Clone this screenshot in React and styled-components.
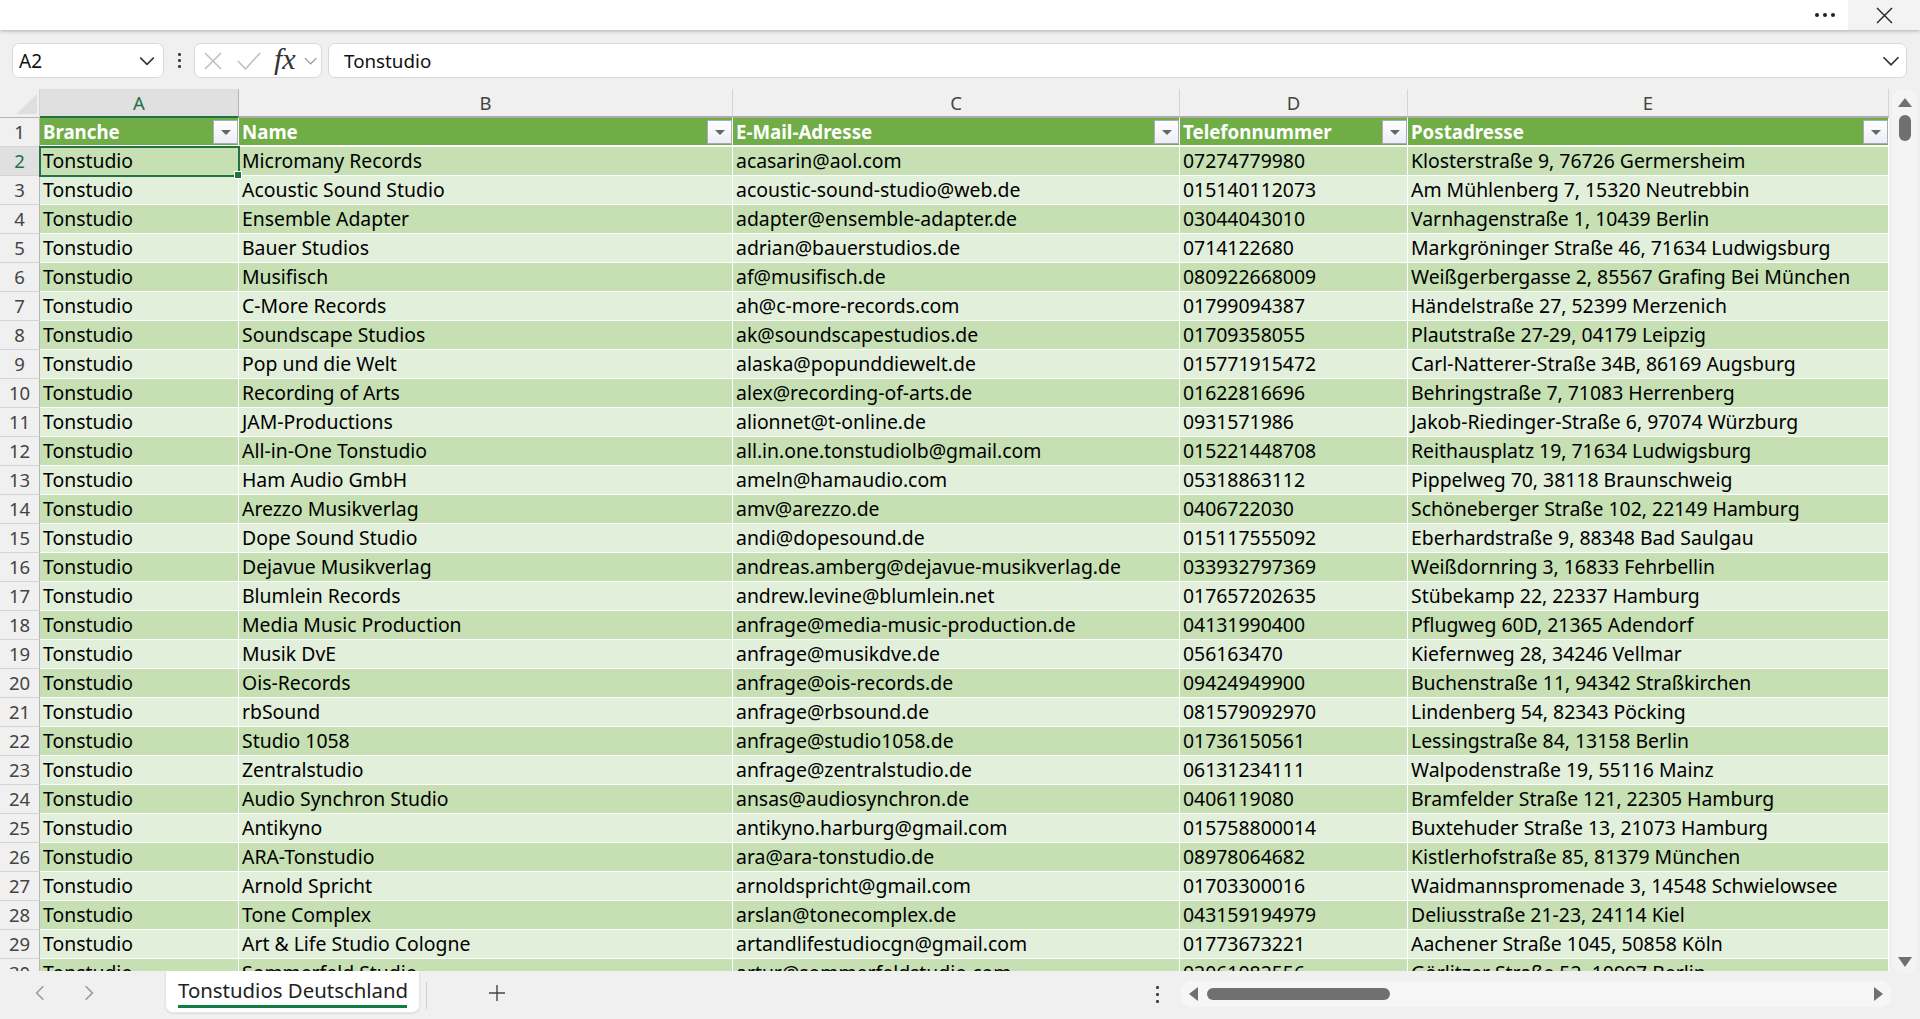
import React from "react";
import styled, { createGlobalStyle } from "styled-components";

const Global = createGlobalStyle`
  html, body { margin: 0; padding: 0; height: 100%; background: #f0f0f0; overflow: hidden; }
  #root { height: 100%; }
`;

const COLS = [199, 494, 447, 228, 481];
const LETTERS = ["A", "B", "C", "D", "E"];
const HEAD = ["Branche", "Name", "E-Mail-Adresse", "Telefonnummer", "Postadresse"];

const DATA = [
  ["Micromany Records", "acasarin@aol.com", "07274779980", "Klosterstraße 9, 76726 Germersheim"],
  ["Acoustic Sound Studio", "acoustic-sound-studio@web.de", "015140112073", "Am Mühlenberg 7, 15320 Neutrebbin"],
  ["Ensemble Adapter", "adapter@ensemble-adapter.de", "03044043010", "Varnhagenstraße 1, 10439 Berlin"],
  ["Bauer Studios", "adrian@bauerstudios.de", "0714122680", "Markgröninger Straße 46, 71634 Ludwigsburg"],
  ["Musifisch", "af@musifisch.de", "080922668009", "Weißgerbergasse 2, 85567 Grafing Bei München"],
  ["C-More Records", "ah@c-more-records.com", "01799094387", "Händelstraße 27, 52399 Merzenich"],
  ["Soundscape Studios", "ak@soundscapestudios.de", "01709358055", "Plautstraße 27-29, 04179 Leipzig"],
  ["Pop und die Welt", "alaska@popunddiewelt.de", "015771915472", "Carl-Natterer-Straße 34B, 86169 Augsburg"],
  ["Recording of Arts", "alex@recording-of-arts.de", "01622816696", "Behringstraße 7, 71083 Herrenberg"],
  ["JAM-Productions", "alionnet@t-online.de", "0931571986", "Jakob-Riedinger-Straße 6, 97074 Würzburg"],
  ["All-in-One Tonstudio", "all.in.one.tonstudiolb@gmail.com", "015221448708", "Reithausplatz 19, 71634 Ludwigsburg"],
  ["Ham Audio GmbH", "ameln@hamaudio.com", "05318863112", "Pippelweg 70, 38118 Braunschweig"],
  ["Arezzo Musikverlag", "amv@arezzo.de", "0406722030", "Schöneberger Straße 102, 22149 Hamburg"],
  ["Dope Sound Studio", "andi@dopesound.de", "015117555092", "Eberhardstraße 9, 88348 Bad Saulgau"],
  ["Dejavue Musikverlag", "andreas.amberg@dejavue-musikverlag.de", "033932797369", "Weißdornring 3, 16833 Fehrbellin"],
  ["Blumlein Records", "andrew.levine@blumlein.net", "017657202635", "Stübekamp 22, 22337 Hamburg"],
  ["Media Music Production", "anfrage@media-music-production.de", "04131990400", "Pflugweg 60D, 21365 Adendorf"],
  ["Musik DvE", "anfrage@musikdve.de", "056163470", "Kiefernweg 28, 34246 Vellmar"],
  ["Ois-Records", "anfrage@ois-records.de", "09424949900", "Buchenstraße 11, 94342 Straßkirchen"],
  ["rbSound", "anfrage@rbsound.de", "081579092970", "Lindenberg 54, 82343 Pöcking"],
  ["Studio 1058", "anfrage@studio1058.de", "01736150561", "Lessingstraße 84, 13158 Berlin"],
  ["Zentralstudio", "anfrage@zentralstudio.de", "06131234111", "Walpodenstraße 19, 55116 Mainz"],
  ["Audio Synchron Studio", "ansas@audiosynchron.de", "0406119080", "Bramfelder Straße 121, 22305 Hamburg"],
  ["Antikyno", "antikyno.harburg@gmail.com", "015758800014", "Buxtehuder Straße 13, 21073 Hamburg"],
  ["ARA-Tonstudio", "ara@ara-tonstudio.de", "08978064682", "Kistlerhofstraße 85, 81379 München"],
  ["Arnold Spricht", "arnoldspricht@gmail.com", "01703300016", "Waidmannspromenade 3, 14548 Schwielowsee"],
  ["Tone Complex", "arslan@tonecomplex.de", "043159194979", "Deliusstraße 21-23, 24114 Kiel"],
  ["Art & Life Studio Cologne", "artandlifestudiocgn@gmail.com", "01773673221", "Aachener Straße 1045, 50858 Köln"],
  ["Sommerfeld Studio", "artur@sommerfeldstudio.com", "02061082556", "Görlitzer Straße 52, 10997 Berlin"],
];

const UI = `"Noto Sans", "Open Sans", sans-serif`;
const CELL = `"Noto Sans", "Open Sans", sans-serif`;

const Page = styled.div`
  height: 100vh; width: 1920px; display: flex; flex-direction: column; overflow: hidden;
  background: #f0f0f0; font-family: ${UI}; color: #111;
`;
const TitleBar = styled.header`
  height: 30px; background: #fff; display: flex; justify-content: flex-end; align-items: stretch;
  box-shadow: 0 1px 4px rgba(0,0,0,.28); position: relative; flex: none;
`;
const MoreDots = styled.div`
  width: 46px; display: flex; align-items: center; justify-content: center; gap: 4px; padding-bottom: 1px;
`;
const Dot = styled.span`
  width: 4px; height: 4px; border-radius: 50%; background: #222;
`;
const CloseBtn = styled.div`
  width: 72px; background: #f3f3f3; display: flex; align-items: center; justify-content: center; color: #222;
`;
const FormulaBar = styled.div`
  flex: none; height: 35px; margin-top: 13px; margin-bottom: 1px; padding: 0 13px 0 12px; display: flex; align-items: stretch;
`;
const FieldBox = styled.div`
  background: #fff; border: 1px solid #d9d9d9; border-radius: 7px; box-sizing: border-box;
  display: flex; align-items: center;
`;
const NameBox = styled(FieldBox)`
  width: 152px; padding: 0 7px 0 6px; justify-content: space-between; font-size: 19px;
`;
const VDots = styled.div`
  width: 30px; display: flex; flex-direction: column; align-items: center; justify-content: center; gap: 3px;
`;
const VDot = styled.span`
  width: 3px; height: 3px; background: #444; border-radius: 1px;
`;
const FnBox = styled(FieldBox)`
  width: 128px; padding: 0 3px 0 9px; justify-content: flex-start;
`;
const CancelIcon = styled.svg`
  margin-right: 15px; flex: none;
`;
const CheckIcon = styled.svg`
  margin-right: 13px; flex: none;
`;
const FxText = styled.span`
  font-family: "Liberation Serif", serif; font-style: italic; font-size: 30px; color: #333; line-height: 1;
  margin-right: 7px; margin-top: -4px; flex: none;
`;
const InputBox = styled(FieldBox)`
  flex: 1; margin-left: 6px; padding: 0 5px 0 15px; justify-content: space-between; font-size: 18.8px;
`;
const SheetArea = styled.div`
  flex: 1; min-height: 0; display: flex; margin-top: 10px;
`;
const Grid = styled.div`
  width: 1889px; overflow: hidden; display: flex; flex-direction: column;
`;
const Row = styled.div`
  display: flex; flex: none; height: 29px;
`;
const Corner = styled.div`
  width: 40px; flex: none; box-sizing: border-box; border-right: 1px solid #d4d4d4; border-bottom: 1px solid #b5b5b5; position: relative; overflow: hidden;
  &::after { content: ""; position: absolute; right: 2px; bottom: 3px; width: 0; height: 0; border-style: solid; border-width: 0 0 20px 21px; border-color: transparent transparent #dfdfdf transparent; }
`;
const ColHead = styled.div`
  flex: none; box-sizing: border-box; text-align: center; padding-top: 1px;
  font-size: 18.5px; line-height: 25px; border-right: 1px solid ${p => (p.$active ? "#b5b5b5" : "#d4d4d4")};
  border-bottom: 2px solid ${p => (p.$active ? "#217346" : "#ababab")};
  background: ${p => (p.$active ? "#e0e0e0" : "transparent")};
  color: ${p => (p.$active ? "#217346" : "#444")};
`;
const RowHead = styled.div`
  width: 40px; flex: none; box-sizing: border-box; text-align: center; font-size: 18.5px; line-height: 28px;
  border-right: 1px solid ${p => (p.$active ? "#217346" : "#b5b5b5")}; border-bottom: 1px solid #d4d4d4;
  background: ${p => (p.$active ? "#e0e0e0" : "transparent")};
  color: ${p => (p.$active ? "#217346" : "#444")};
`;
const Cell = styled.div`
  flex: none; box-sizing: border-box; position: relative; background: ${p => p.$bg};
  border-right: 1px solid #fff; border-bottom: 1px solid #fff;
  padding: 0 0 0 3px; font-family: ${CELL}; font-size: 19.4px; line-height: 28px; white-space: nowrap; overflow: visible; color: #000;
`;
const SelectedCell = styled(Cell)`
  outline: 2px solid #217346; outline-offset: -1px; z-index: 2;
`;
const FillHandle = styled.span`
  position: absolute; right: -4px; bottom: -4px; width: 6px; height: 6px; background: #217346; border: 1px solid #fff;
`;
const HeadCell = styled.div`
  flex: none; box-sizing: border-box; position: relative; background: #70ad47; color: #fff; font-weight: 700;
  border-right: 1px solid #fff; border-bottom: 2px solid #fff; padding-left: 3px; font-family: ${CELL}; font-size: 18.7px; line-height: 27px; white-space: nowrap;
`;
const FilterBtn = styled.span`
  position: absolute; right: 0; top: 2px; width: 25px; height: 24px; box-sizing: border-box;
  background: linear-gradient(#fff, #eceef5); border: 1px solid #a9acb5;
  display: flex; align-items: center; justify-content: center;
  &::after { content: ""; width: 0; height: 0; border-left: 5px solid transparent; border-right: 5px solid transparent; border-top: 5px solid #666; }
`;
const VScroll = styled.aside`
  width: 31px; flex: none; display: flex; justify-content: center; align-items: flex-start; position: relative; z-index: 1; margin-bottom: -3px;
`;
const VTrack = styled.div`
  position: relative; width: 25px; height: 100%; background: #f4f4f4; border-radius: 12px; display: flex; flex-direction: column; align-items: center;
`;
const TriUp = styled.span`
  width: 0; height: 0; margin-top: 9px; border-left: 7px solid transparent; border-right: 7px solid transparent; border-bottom: 9px solid #707070;
`;
const VThumb = styled.span`
  width: 12px; height: 26px; margin-top: 8px; background: #707070; border-radius: 6px;
`;
const TriDown = styled.span`
  position: absolute; bottom: 7px; width: 0; height: 0; border-left: 7px solid transparent; border-right: 7px solid transparent; border-top: 10px solid #707070;
`;
const Footer = styled.footer`
  flex: none; height: 48px; display: flex; align-items: flex-start; background: #f0f0f0;
`;
const NavArrows = styled.div`
  width: 165px; height: 44px; flex: none; display: flex; align-items: center; gap: 31px; padding-left: 31px; box-sizing: border-box; color: #9a9a9a;
`;
const Tab = styled.div`
  width: 255px; height: 42px; flex: none; box-sizing: border-box; background: #fff; border: 1px solid #e6e6e6; border-top: none;
  border-radius: 0 0 8px 8px; padding: 0 12px; font-size: 20.4px; color: #222; display: flex; flex-direction: column; align-items: center;
  box-shadow: 0 1px 2px rgba(0,0,0,.08);
`;
const TabLabel = styled.span`
  display: block; line-height: 28px; padding-top: 5px; padding-bottom: 1px; border-bottom: 3px solid #107c41; white-space: nowrap; width: 100%; text-align: center;
`;
const TabSep = styled.span`
  width: 1px; height: 27px; margin: 11px 0 0 6px; background: #cfcfcf; flex: none;
`;
const AddBtn = styled.div`
  width: 140px; height: 44px; flex: none; display: flex; align-items: center; justify-content: center; color: #444;
`;
const Spacer = styled.div`
  flex: 1;
`;
const HDots = styled(VDots)`
  width: 30px; height: 46px; gap: 4px; margin-right: 9px; flex: none;
`;
const HTrack = styled.div`
  width: 710px; height: 26px; margin: 10px 29px 0 0; background: #f6f6f6; border-radius: 10px; display: flex; align-items: center; padding: 0 8px; box-sizing: border-box; flex: none;
`;
const TriLeft = styled.span`
  width: 0; height: 0; border-top: 7px solid transparent; border-bottom: 7px solid transparent; border-right: 9px solid #707070; flex: none;
`;
const HThumb = styled.span`
  width: 183px; height: 12px; margin-left: 9px; background: #707070; border-radius: 6px; flex: none;
`;
const TriRight = styled.span`
  width: 0; height: 0; margin-left: auto; border-top: 7px solid transparent; border-bottom: 7px solid transparent; border-left: 9px solid #707070; flex: none;
`;

const Chevron = ({ size = 18, color = "#333", dir = "down" }) => (
  <svg width={size} height={size} viewBox="0 0 16 16" fill="none" stroke={color} strokeWidth="1.4">
    {dir === "down" && <path d="M2 5l6 6 6-6" />}
    {dir === "left" && <path d="M11 2L5 8l6 6" />}
    {dir === "right" && <path d="M5 2l6 6-6 6" />}
  </svg>
);

export default function App() {
  return (
    <Page>
      <Global />
      <TitleBar>
        <MoreDots><Dot /><Dot /><Dot /></MoreDots>
        <CloseBtn>
          <svg width="17" height="17" viewBox="0 0 17 17" stroke="#222" strokeWidth="1.4"><path d="M1 1l15 15M16 1L1 16" /></svg>
        </CloseBtn>
      </TitleBar>
      <FormulaBar>
        <NameBox>A2<Chevron /></NameBox>
        <VDots><VDot /><VDot /><VDot /></VDots>
        <FnBox>
          <CancelIcon width="18" height="18" viewBox="0 0 18 18" stroke="#bfbfbf" strokeWidth="1.6"><path d="M1 1l16 16M17 1L1 17" /></CancelIcon>
          <CheckIcon width="24" height="18" viewBox="0 0 24 18" fill="none" stroke="#bfbfbf" strokeWidth="1.6"><path d="M1 9l7.5 8L23 1" /></CheckIcon>
          <FxText>fx</FxText>
          <Chevron size={16} color="#999" />
        </FnBox>
        <InputBox>Tonstudio<Chevron size={20} /></InputBox>
      </FormulaBar>
      <SheetArea>
        <Grid>
          <Row>
            <Corner />
            {COLS.map((w, i) => (
              <ColHead key={i} style={{ width: w }} $active={i === 0}>{LETTERS[i]}</ColHead>
            ))}
          </Row>
          <Row>
            <RowHead>1</RowHead>
            {COLS.map((w, i) => (
              <HeadCell key={i} style={{ width: w }}>{HEAD[i]}<FilterBtn /></HeadCell>
            ))}
          </Row>
          {DATA.map((r, idx) => {
            const bg = idx % 2 === 0 ? "#c6e0b4" : "#e2efda";
            return (
              <Row key={idx}>
                <RowHead $active={idx === 0}>{idx + 2}</RowHead>
                {idx === 0 ? (
                  <SelectedCell style={{ width: COLS[0] }} $bg={bg}>Tonstudio<FillHandle /></SelectedCell>
                ) : (
                  <Cell style={{ width: COLS[0] }} $bg={bg}>Tonstudio</Cell>
                )}
                {r.map((t, i) => (
                  <Cell key={i} style={{ width: COLS[i + 1] }} $bg={bg}>{t}</Cell>
                ))}
              </Row>
            );
          })}
        </Grid>
        <VScroll>
          <VTrack><TriUp /><VThumb /><TriDown /></VTrack>
        </VScroll>
      </SheetArea>
      <Footer>
        <NavArrows><Chevron dir="left" color="#9a9a9a" /><Chevron dir="right" color="#9a9a9a" /></NavArrows>
        <Tab><TabLabel>Tonstudios Deutschland</TabLabel></Tab>
        <TabSep />
        <AddBtn>
          <svg width="18" height="18" viewBox="0 0 18 18" stroke="#444" strokeWidth="1.4"><path d="M9 1v16M1 9h16" /></svg>
        </AddBtn>
        <Spacer />
        <HDots><VDot /><VDot /><VDot /></HDots>
        <HTrack><TriLeft /><HThumb /><TriRight /></HTrack>
      </Footer>
    </Page>
  );
}
